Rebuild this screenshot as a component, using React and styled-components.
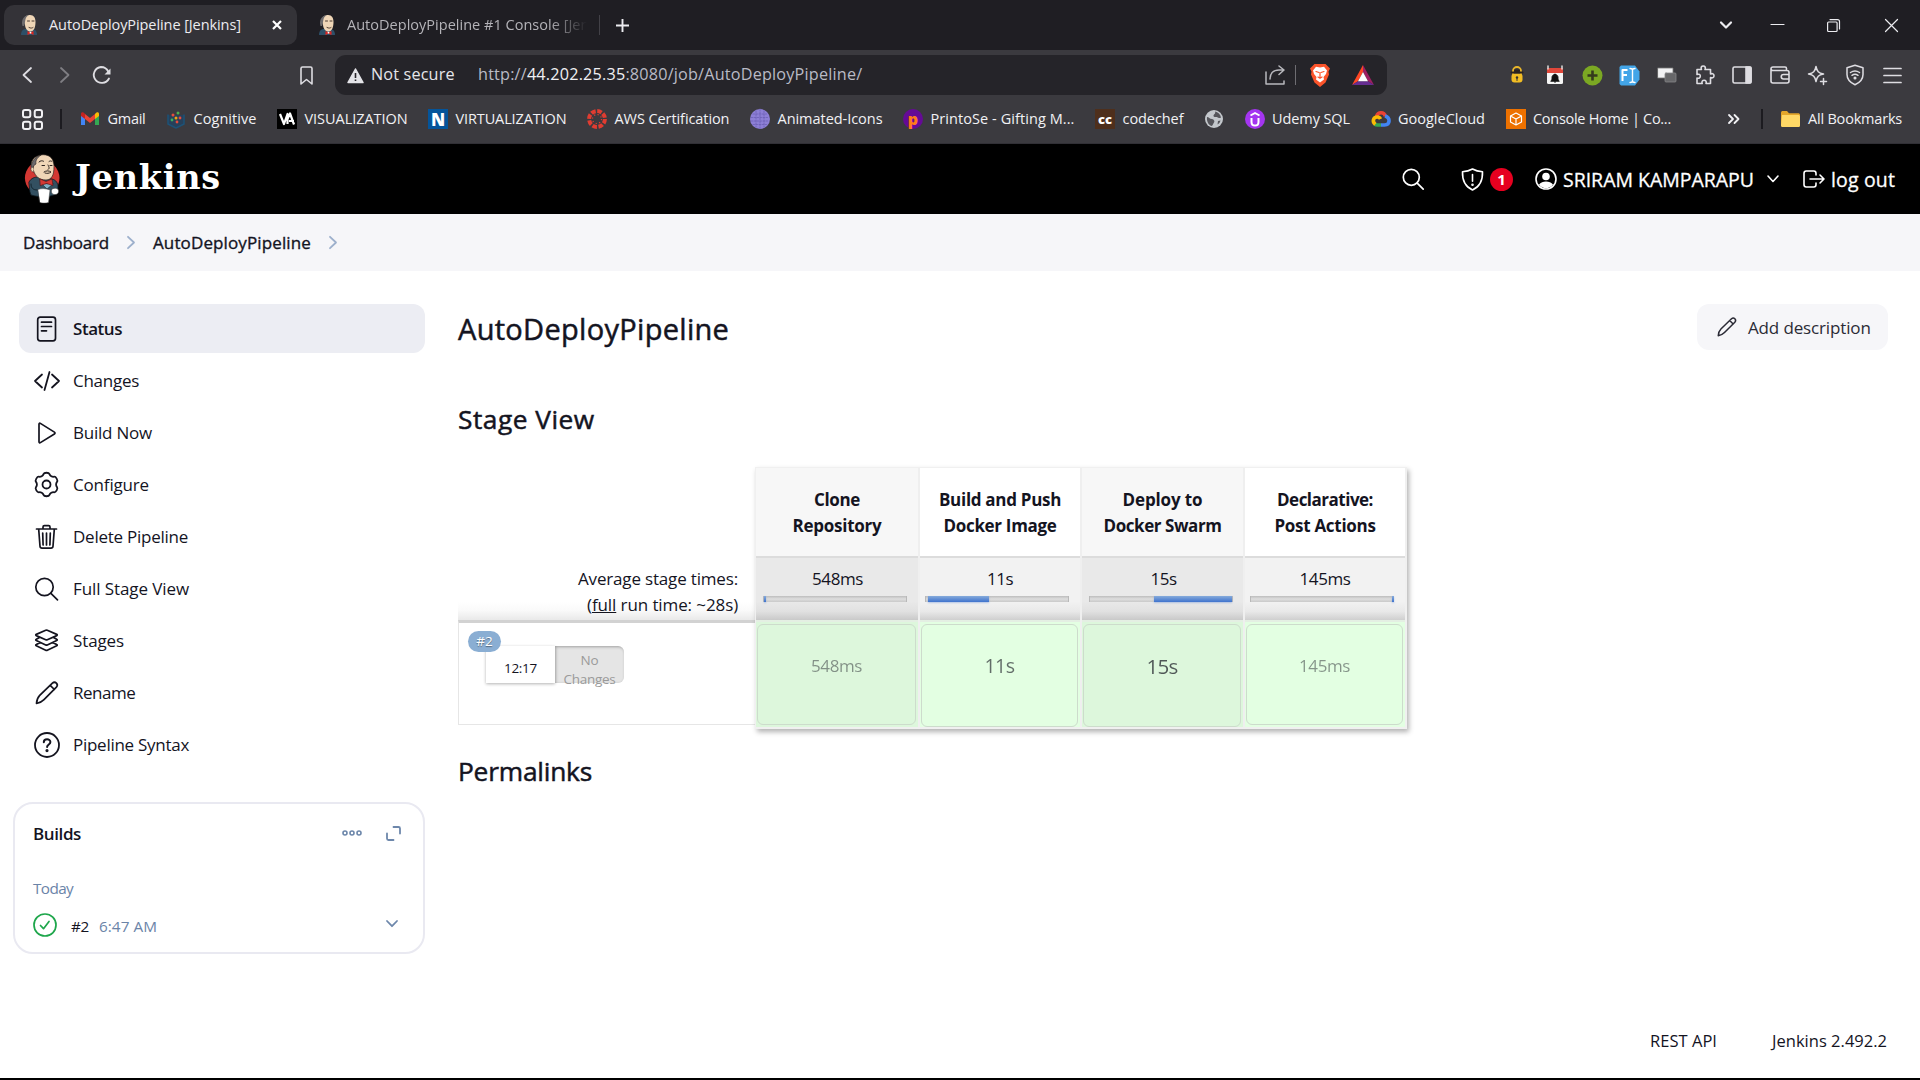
import React from "react";
import styled, { createGlobalStyle } from "styled-components";

const Global = createGlobalStyle`
  * { box-sizing: border-box; }
  html, body { margin: 0; padding: 0; background: #fff; overflow: hidden; }
  body { font-family: "Open Sans", "Noto Sans", sans-serif; color: #14141f; }
`;

const Screen = styled.div`
  width: 1920px;
  height: 1080px;
  display: flex;
  flex-direction: column;
  overflow: hidden;
  background: #fff;
  border-bottom: 2px solid #000;
`;

const Label = styled.span`
  display: block;
  flex: none;
  box-sizing: content-box;
  width: ${(p) => (p.$w ? `${p.$w}px` : "auto")};
  padding-top: ${(p) => p.$pad || 0}px;
  margin-left: ${(p) => p.$ml || 0}px;
  font-size: ${(p) => p.$s || 17}px;
  font-weight: ${(p) => p.$b || 400};
  letter-spacing: ${(p) => p.$ls || 0}px;
  color: ${(p) => p.$c || "inherit"};
  -webkit-text-stroke: ${(p) => p.$stroke || 0}px currentColor;
  white-space: nowrap;
  line-height: 1.3;
`;

/* ---------- shared drawing helpers ---------- */
const Glyph = styled.svg`
  display: block;
  flex: none;
  overflow: visible;
  margin-left: ${(p) => p.$ml || 0}px;
`;
const Icon = ({ w, h, box, sw = 1.5, ml, children, ...rest }) => (
  <Glyph
    width={w}
    height={h}
    viewBox={box || `0 0 ${w} ${h}`}
    fill="none"
    stroke="currentColor"
    strokeWidth={sw}
    strokeLinecap="round"
    strokeLinejoin="round"
    $ml={ml}
    {...rest}
  >
    {children}
  </Glyph>
);

const Favicon = () => (
  <Icon w={18} h={20} stroke="none">
    <path d="M1 20c0-4 2-6 5-6h6c3 0 5 2 5 6z" fill="#2d5068" />
    <path d="M4 6c0-4 2.500-6 6-6 4 0 5.500 3 5.500 7 0 5-1.500 9.500-5 9.500-3 0-5-2.500-5.500-6.500z" fill="#efd6b7" />
    <path d="M2.500 11C1 6 3 .5 9 0 5.500 2 5.500 4 5 7l-1 4z" fill="#6d6b6d" />
    <path d="M7.500 6h2M12 6h2M9 12.500c2 1 3 .6 4 0" stroke="#4b3a30" strokeWidth="1" />
    <path d="M7.500 16l3 1.500 3-1.500v4l-3-1.500-3 1.500z" fill="#e0241f" />
    <circle cx="10.500" cy="17.700" r=".9" fill="#fff" />
  </Icon>
);

/* ---------- browser: tab strip ---------- */
const TabStrip = styled.div`
  height: 50px;
  flex: none;
  display: flex;
  align-items: center;
  background: #1f1e23;
  color: #ececf0;
  padding-left: 4px;
`;
const Tab = styled.div`
  width: ${(p) => (p.$active ? 293 : 302)}px;
  height: 40px;
  border-radius: 10px;
  display: flex;
  align-items: center;
  gap: 11px;
  padding-left: ${(p) => (p.$active ? 16 : 21)}px;
  background: ${(p) => (p.$active ? "#343338" : "transparent")};
`;
const TabClose = styled.div`
  margin-left: 19px;
`;
const FadedTitle = styled.div`
  width: 240px;
  overflow: hidden;
  color: #b4b3b8;
  mask-image: linear-gradient(to right, #000 84%, transparent 100%);
`;
const TabDivider = styled.div`
  width: 1px;
  height: 20px;
  background: #424147;
  margin-right: 16px;
`;
const WindowControls = styled.div`
  margin-left: auto;
  display: flex;
  align-items: center;
  padding-right: 22px;
`;
const WinBtn = styled.div`
  margin-left: ${(p) => p.$ml}px;
`;

/* ---------- browser: toolbar ---------- */
const Toolbar = styled.div`
  height: 94px;
  flex: none;
  background: #3b3a3f;
  color: #dedde2;
  border-bottom: 1px solid #313036;
`;
const NavRow = styled.div`
  height: 50px;
  display: flex;
  align-items: center;
  padding-left: 22px;
`;
const NavButtons = styled.div`
  display: flex;
  align-items: center;
  width: 278px;
`;
const AddressBar = styled.div`
  margin-left: 22px;
  width: 1052px;
  height: 40px;
  border-radius: 11px;
  background: #252429;
  display: flex;
  align-items: center;
  padding: 0 13px 0 12px;
`;
const Url = styled(Label)`
  b { font-weight: 400; color: #f0f0f4; }
`;
const BarDivider = styled.div`
  width: 1px;
  height: 20px;
  background: #6e6d72;
  margin: 0 14px 0 10px;
`;
const AddressActions = styled.div`
  margin-left: auto;
  display: flex;
  align-items: center;
`;
const Extensions = styled.div`
  margin-left: auto;
  display: flex;
  align-items: center;
  padding-right: 9px;
`;
const Slot = styled.div`
  width: 37.5px;
  display: flex;
  justify-content: center;
`;
const BookmarkRow = styled.div`
  height: 38px;
  display: flex;
  align-items: center;
  padding: 0 18px 0 22px;
  color: #f1f1f4;
`;
const DarkDivider = styled.div`
  flex: none;
  width: 2px;
  height: 20px;
  background: #1c1b20;
  margin: ${(p) => (p.$end ? "0 9px 0 13px" : "0 18px 0 17px")};
`;
const Bookmark = styled.div`
  flex: none;
  display: flex;
  align-items: center;
  gap: 7.5px;
  margin-right: 20.5px;
`;
const Square = styled.div`
  width: 20px;
  height: 20px;
  display: flex;
  align-items: center;
  justify-content: center;
  background: ${(p) => p.$bg};
  color: ${(p) => p.$c || "#fff"};
  border-radius: ${(p) => (p.$round ? "50%" : 0)};
  font-size: ${(p) => p.$fs || 14}px;
  font-weight: 800;
  line-height: 1;
`;
const BookmarksEnd = styled.div`
  margin-left: auto;
  display: flex;
  align-items: center;
  gap: 8px;
`;

/* ---------- Jenkins header ---------- */
const Header = styled.header`
  height: 70px;
  flex: none;
  background: #000;
  color: #fff;
  display: flex;
  align-items: center;
  padding: 0 24px;
`;
const Brand = styled(Label)`
  font-family: "DejaVu Serif", serif;
  padding-bottom: 2px;
`;
const HeaderTools = styled.div`
  margin-left: auto;
  display: flex;
  align-items: center;
`;
const Badge = styled.div`
  width: 23px;
  height: 23px;
  margin: 0 22px 0 6px;
  border-radius: 50%;
  background: #e6001f;
  font-size: 15px;
  font-weight: 700;
  line-height: 23px;
  text-align: center;
`;
const Crumbs = styled.nav`
  height: 57px;
  flex: none;
  background: #f6f6f9;
  display: flex;
  align-items: center;
  padding-left: 23px;
  gap: 18px;
`;

/* ---------- page ---------- */
const Page = styled.div`
  flex: 1;
  display: flex;
`;
const Side = styled.aside`
  width: 425px;
  padding-top: 33px;
`;
const Tasks = styled.div`
  display: flex;
  flex-direction: column;
  gap: 3px;
  padding-left: 19px;
`;
const Task = styled.div`
  height: 49px;
  border-radius: 12px;
  display: flex;
  align-items: center;
  padding-left: 15px;
  background: ${(p) => (p.$on ? "#ecedf3" : "transparent")};
`;
const TaskIcon = styled.div`
  width: 25px;
  margin-right: 14px;
  display: flex;
  justify-content: center;
`;
const Card = styled.section`
  margin: 33px 0 0 13px;
  height: 152px;
  border: 2px solid #e9e9f1;
  border-radius: 20px;
  padding: 0 22px 0 18px;
`;
const CardHead = styled.div`
  height: 58px;
  display: flex;
  align-items: center;
  justify-content: space-between;
`;
const CardTools = styled.div`
  display: flex;
  align-items: center;
  gap: 24px;
  color: #6d87ab;
`;
const Today = styled.div`
  height: 51px;
  padding-top: 3px;
  display: flex;
  align-items: center;
  color: #6b84a8;
`;
const BuildLine = styled.div`
  display: flex;
  align-items: center;
  margin-top: -3px;
  height: 29px;
`;
const ChevronEnd = styled.div`
  margin: 0 3px 1px auto;
  color: #6d87ab;
`;

const Main = styled.main`
  flex: 1;
  padding: 33px 32px 0 33px;
  display: flex;
  flex-direction: column;
`;
const TitleRow = styled.div`
  display: flex;
  justify-content: space-between;
  height: 46px;
  align-items: center;
`;
const AddButton = styled.div`
  width: 191px;
  height: 46px;
  border-radius: 12px;
  background: #f6f6f9;
  display: flex;
  align-items: center;
  padding-left: 20px;
  gap: 11px;
  color: #2b2b36;
`;
const SectionTitle = styled(Label)`
  height: 34px;
  line-height: 34px;
  margin-top: ${(p) => p.$mt}px;
`;
const Stage = styled.div`
  display: flex;
  align-items: flex-start;
  height: 262px;
  margin-top: 31px;
`;
const RunColumn = styled.div`
  width: 297px;
  padding-top: 91px;
`;
const Average = styled.div`
  height: 62px;
  padding: 8px 17px 0 0;
  display: flex;
  flex-direction: column;
  align-items: flex-end;
  background: linear-gradient(to bottom, #fff 70%, #fafafa 84%, #e9e9e9 100%);
  span { line-height: 26px; }
`;
const RunBox = styled.div`
  height: 105px;
  border: 1px solid #e6e6e6;
  border-top: 3px solid #d2d2d2;
  border-right: 0;
  padding: 8px 0 0 9px;
`;
const RunBadge = styled.div`
  position: relative;
  z-index: 1;
  width: 33px;
  height: 21px;
  border-radius: 11px;
  background: #8aaed3;
  color: #fff;
  font-size: 13.5px;
  line-height: 20px;
  text-align: center;
  text-shadow: 0 1px 1px rgba(0, 0, 0, 0.4);
`;
const RunMeta = styled.div`
  display: flex;
  margin: -6px 0 0 18px;
`;
const RunTime = styled.div`
  width: 69px;
  height: 37px;
  background: #fff;
  box-shadow: 0 1px 3px rgba(0, 0, 0, 0.3);
  padding: 14px 0 0 18px;
`;
const NoChanges = styled.div`
  width: 69px;
  height: 37px;
  border-radius: 0 6px 6px 0;
  background: #e5e5e5;
  box-shadow: inset 1px 1px 3px rgba(0, 0, 0, 0.3);
  color: #9a9a9a;
  padding-top: 5px;
  display: flex;
  flex-direction: column;
  align-items: center;
  span { line-height: 19px; }
`;
const StageTable = styled.div`
  display: grid;
  grid-template-columns: 164px 162px 163px 160px;
  width: 652px;
  height: 262px;
  border: 1px solid #f0f0f0;
  border-right-width: 2px;
  border-bottom: 2px solid #f0f0f0;
  box-shadow: 2px 3px 5px rgba(0, 0, 0, 0.3);
`;
const StageCol = styled.div`
  border-right: 2px solid #efefef;
  background: ${(p) => (p.$odd ? "#f7f7f7" : "#fff")};
  &:last-child { border-right: 0; }
`;
const StageHead = styled.div`
  height: 88px;
  padding-top: 19px;
  display: flex;
  flex-direction: column;
  align-items: center;
  span { line-height: 26px; }
`;
const StageAvg = styled.div`
  height: 64px;
  border-top: 2px solid #dcdcdc;
  padding: 8px 0 0 ${(p) => (p.$odd ? 6.500 : 5)}px;
  background: linear-gradient(
    to bottom,
    ${(p) => (p.$odd ? "#e9e9e9 70%, #e1e1e1 86%, #c9c9c9 100%" : "#f2f2f2 70%, #e9e9e9 86%, #cfcfcf 100%")}
  );
  display: grid;
  grid-template-columns: 144px;
  justify-items: center;
  align-content: start;
  span { line-height: 26px; }
`;
const Meter = styled.div`
  width: 144px;
  height: 6px;
  margin-top: 4px;
  background: linear-gradient(to bottom, #bdbdbd, #dedede 50%, #c9c9c9);
  border: solid #b9b9b9;
  border-width: 0 1px;
  display: flex;
`;
const MeterFill = styled.div`
  flex: none;
  margin-left: ${(p) => p.$from}px;
  width: ${(p) => p.$len}px;
  background: linear-gradient(to bottom, #86abdb, #3f73cd);
  box-shadow: 0 1px 2px rgba(63, 115, 205, 0.35);
`;
const Cell = styled.div`
  height: 107px;
  border-top: 2px solid #e4efe3;
  padding: 2px 2px 2px 1px;
  background: ${(p) => (p.$odd ? "#ddf7dc" : "#e3ffe2")};
`;
const CellCard = styled.div`
  height: ${(p) => (p.$tall ? 103 : 101)}px;
  border: 1px solid #cddccc;
  border-radius: 6px;
  display: flex;
  justify-content: center;
  padding-top: ${(p) => (p.$tall ? 28 : 30)}px;
`;
const CellTime = styled(Label)`
  opacity: ${(p) => p.$o};
`;
const Footer = styled.footer`
  margin-top: auto;
  display: flex;
  justify-content: flex-end;
  gap: 54px;
  padding-bottom: 27px;
`;

/* ---------- data ---------- */
const gearPath = (() => {
  const pts = [];
  for (let k = 0; k < 6; k++) {
    const a = k * 60 - 90;
    [[12, -12], [12, 12], [9.7, 21], [9.7, 39]].forEach(([r, d]) => {
      const t = ((a + d) * Math.PI) / 180;
      pts.push([12.5 + r * Math.cos(t), 12.5 + r * Math.sin(t)]);
    });
  }
  const mid = (p, q) => [(p[0] + q[0]) / 2, (p[1] + q[1]) / 2];
  let d = "";
  pts.forEach((p, i) => {
    const n = pts[(i + 1) % pts.length];
    const prev = pts[(i - 1 + pts.length) % pts.length];
    if (i === 0) d += `M${mid(prev, p)}`;
    d += `Q${p} ${mid(p, n)}`;
  });
  return d + "Z";
})();

const Pencil = ({ s = 24 }) => (
  <Icon w={s} h={s} box="0 0 24 24" sw={s < 22 ? 1.8 : 1.7}>
    <path d="M1.500 22.500c.3-4 1.300-6.200 3.200-8.100L17.400 2.200c1.300-1.200 2.900-1.100 4 0s1.200 2.700 0 4L9 18.700c-1.900 1.900-3.500 3.300-7.500 3.800zM15.200 4.300l4.200 4.200" />
  </Icon>
);

const tasks = [
  ["Status", 49, -0.46, <Icon w={25} h={26} sw={1.7}><rect x="3.700" y="1.200" width="17.800" height="23.600" rx="2.500" /><path d="M7.500 6.200h10M7.500 10.500h10M7.500 14.800h5" /></Icon>],
  ["Changes", 66, -0.27, <Icon w={26} h={20} sw={1.8}><path d="M8 3.500L1 10l7 6.500M18 3.500L25 10l-7 6.500M15.500 1l-5 18" /></Icon>],
  ["Build Now", 79, -0.22, <Icon w={25} h={22} sw={1.7}><path d="M5 2.200v17.600c0 .9.7 1.200 1.400.8l14-8.600c.8-.5.8-1.400 0-1.900l-14-8.700c-.7-.4-1.400-.1-1.400.8z" /></Icon>],
  ["Configure", 76, -0.17, <Icon w={25} h={25} sw={1.8}><path d={gearPath} /><circle cx="12.500" cy="12.500" r="4" /></Icon>],
  ["Delete Pipeline", 115, -0.25, <Icon w={25} h={26} sw={1.7}><path d="M2.500 5h20M4.700 5.300l1.300 17c.1 1.200.8 1.900 2 1.900h9c1.200 0 1.900-.7 2-1.900l1.300-17M9 4.800V3c0-.9.500-1.400 1.400-1.400h4.200c.9 0 1.400.5 1.400 1.400v1.800M12.500 9v12M8.700 9l.4 12M16.300 9l-.4 12" /></Icon>],
  ["Full Stage View", 116, -0.09, <Icon w={25} h={24} sw={1.7}><circle cx="10.500" cy="10" r="8.700" /><path d="M16.900 16.300l6.600 6.500" /></Icon>],
  ["Stages", 51, -0.12, <Icon w={25} h={24} sw={1.7}><path d="M11.700 1.300L2.300 5.400c-.7.300-.7.900 0 1.200l9.400 4.100c.6.200 1.100.2 1.600 0l9.400-4.100c.7-.3.700-.9 0-1.200l-9.400-4.100c-.5-.2-1-.2-1.600 0zM5.500 8.600l-3.200 1.700c-.7.300-.7.900 0 1.200l9.400 4.400c.6.200 1.100.2 1.600 0l9.400-4.400c.7-.3.700-.9 0-1.200l-3.200-1.700M5.500 13.900l-3.200 1.700c-.7.300-.7.900 0 1.200l9.400 4.400c.6.300 1.100.3 1.600 0l9.400-4.400c.7-.3.700-.9 0-1.200l-3.200-1.700" /></Icon>],
  ["Rename", 62, -0.5, <Pencil />],
  ["Pipeline Syntax", 116, -0.27, <Icon w={26} h={26} sw={1.8}><circle cx="13" cy="13" r="12" /><path d="M9.800 10.300c0-3.900 6.600-3.900 6.600-.2 0 2.500-3.300 2.300-3.300 5" strokeWidth="2" /><circle cx="13" cy="18.600" r=".7" fill="currentColor" /></Icon>],
];

const stages = [
  { head: [["Clone", 46, -0.35], ["Repository", 89, -0.25]], avg: ["548ms", 51, -0.4], from: 0, len: 2, cell: [17, 51, -0.4, 0.45], odd: true },
  { head: [["Build and Push", 122, -0.3], ["Docker Image", 113, -0.32]], avg: ["11s", 26, -0.52], from: 2, len: 61, cell: [19.5, 30, -0.53, 0.62], tall: true },
  { head: [["Deploy to", 80, -0.12], ["Docker Swarm", 118, -0.43]], avg: ["15s", 26, -0.52], from: 64, len: 78, cell: [20.5, 31, -0.74, 0.7], odd: true, tall: true },
  { head: [["Declarative:", 96, -0.5], ["Post Actions", 101, -0.3]], avg: ["145ms", 51, -0.4], from: 141, len: 2, cell: [17, 51, -0.4, 0.45] },
];

const bookmarks = [
  ["Gmail", 38, -0.27, <Icon w={20} h={20} stroke="none"><path d="M1 4.500V16h4V9z" fill="#4285f4" /><path d="M19 4.500V16h-4V9z" fill="#34a853" /><path d="M15 5v5l4-3V5c0-2-2.300-2.600-4 0z" fill="#fbbc04" /><path d="M5 5v5L1 7V5c0-2 2.300-2.600 4 0z" fill="#c5221f" /><path d="M5 5l5 4 5-4v5l-5 4-5-4z" fill="#ea4335" /></Icon>],
  ["Cognitive", 63, 0.06, <Icon w={20} h={20} stroke="none"><path d="M2 6v9l8 4 8-4V6" stroke="#1d5277" strokeWidth="1.500" fill="#27405a" /><circle cx="7" cy="6" r="1.500" fill="#e74c3c" /><circle cx="12" cy="4" r="1.500" fill="#4caf50" /><circle cx="10" cy="9" r="1.500" fill="#f1a40f" /><circle cx="14" cy="9" r="1.400" fill="#e74c3c" /><circle cx="6" cy="11" r="1.400" fill="#3fae5b" /><circle cx="11" cy="13" r="1.400" fill="#e74c3c" /></Icon>],
  ["VISUALIZATION", 103, -0.05, <Square $bg="#000"><Icon w={16} h={14} sw={2.2} strokeLinecap="butt"><path d="M1 2l4 10L8.500 2v10M8.500 7L11 1.500 15 12.500M10 9h5" /></Icon></Square>],
  ["VIRTUALIZATION", 111, -0.12, <Square $bg="#04549a" $fs={17}>N</Square>],
  ["AWS Certification", 115, -0.08, <Icon w={20} h={20} stroke="#e03c31" strokeLinecap="butt"><circle cx="10" cy="10" r="7.900" strokeWidth="4" strokeDasharray="4.600 1.605" /><circle cx="10" cy="10" r="4.500" strokeWidth="1.200" strokeDasharray="1.200 2.334" /></Icon>],
  ["Animated-Icons", 105, -0.04, <Icon w={20} h={20} stroke="none"><circle cx="10" cy="10" r="10" fill="#8d7fd6" /><path d="M3 5h14M1 8.500h18M1 12h18M3 15.500h14M6 2v16M10 0v20M14 2v16" stroke="#6c5fb5" strokeWidth=".8" strokeDasharray="1.500 1.500" /></Icon>],
  ["PrintoSe - Gifting M...", 144, 0.07, <Square $bg="#650a96" $c="#ff7a1a" $round $fs={16}>p</Square>],
  ["codechef", 61, -0.07, <Square $bg="#4e2f1c" $fs={13}>cc</Square>],
  ["", 0, 0, <Icon w={20} h={20} stroke="none"><circle cx="10" cy="10" r="9" fill="#c3c7cc" /><path d="M11 2.500c3 .6 5.500 2.700 6 6-1.500 1-3 .5-4-.5-1.500-.3-3 .5-3.500-1 0-2 2.500-2 1.500-4.500zM3 8c2 0 2.500 2 5 2 2 .5 3 2 2 3.500-1 1-1 3-2.500 3.500C4.500 16 2.500 12.500 3 8zM14 12l2.500-.5c-.5 2-1.500 3.300-3 4z" fill="#55555b" /></Icon>],
  ["Udemy SQL", 78, -0.09, <Square $bg="#a435f0" $round><Icon w={12} h={16} sw={2} strokeLinecap="butt"><path d="M1.500 4.500L6 2l4.500 2.500M2.500 7v4c0 2.500 1.500 3.600 3.500 3.600s3.500-1.100 3.500-3.600V7" /></Icon></Square>],
  ["GoogleCloud", 87, 0, <Icon w={20} h={20} sw={3.6} strokeLinecap="butt"><path d="M5.500 7.500C7 2.600 13 2.600 14.500 7.300" stroke="#ea4335" /><path d="M14 7c5.500 1.500 5.500 9-.5 9H10" stroke="#4285f4" /><path d="M10 16H6.500c-1 0-2-.3-2.700-.9" stroke="#34a853" /><path d="M4.300 15.300C1 12.500 2 8 6.500 8c1.500 0 2.500 1 3 2" stroke="#fbbc05" /></Icon>],
  ["Console Home | Co...", 138, -0.29, <Square $bg="#ed7100"><Icon w={14} h={14} sw={1.2}><path d="M7 1l5.500 3v6L7 13l-5.500-3V4zM1.500 4L7 7l5.500-3M7 7v6" /></Icon></Square>],
];

const extensions = [
  <Icon w={14} h={18} stroke="none"><path d="M3 8V5a4 4 0 018 0v3" stroke="#e9b62b" strokeWidth="1.800" /><rect x="1.500" y="7.500" width="11" height="9" rx="3" fill="#f2bd24" /><path d="M1.500 6.500h11M5 4.500h4" stroke="#2a2320" strokeWidth="2" /><circle cx="7" cy="11.500" r="1.200" fill="#333" /><path d="M7 12v2.500" stroke="#333" strokeWidth="1" /></Icon>,
  <Icon w={18} h={20} stroke="none"><rect x="1" y="3" width="16" height="16" rx="1.500" fill="#f5f5f5" /><path d="M1 3h16v5H1z" fill="#e0473a" /><path d="M2 1v3M16 1v3" stroke="#ddd" strokeWidth="1.500" /><path d="M5 16c1-1 1-2 1-3.500 0-4 6-4 6 0 0 1.500 0 2.500 1 3.500zM9 9v8.500" fill="#111" stroke="#111" strokeWidth="1" /></Icon>,
  <Icon w={21} h={21} stroke="none"><circle cx="10.500" cy="10.500" r="10" fill="#7ba823" /><path d="M10.500 5.500v10M5.500 10.500h10" stroke="#343a1d" strokeWidth="2.600" strokeLinecap="butt" /></Icon>,
  <Icon w={21} h={21} stroke="none"><path d="M2 .5h14l4.500 6v8l-4.500 6H2L.5 19V2z" fill="#43a5e8" /><path d="M3.500 16V5h5M3.500 10h4.500" stroke="#fff" strokeWidth="2" strokeLinecap="butt" /><path d="M11 3.500c2 0 2.500.5 2.500 1.500 0-1 .5-1.500 2.500-1.500M13.500 5v11M11 17.500c2 0 2.500-.5 2.500-1.500 0 1 .5 1.500 2.500 1.500" stroke="#fff" strokeWidth="1.400" /></Icon>,
  <Icon w={18} h={16} stroke="none"><rect x="0" y="1" width="15" height="10" fill="#f2f2f4" stroke="#777" strokeWidth=".8" /><rect x="7" y="6" width="11" height="9" rx="1" fill="#67676a" stroke="#858588" strokeWidth=".8" /></Icon>,
  <Icon w={20} h={20} sw={1.6}><path d="M2 4.500h4.500C5.500 2.500 6.500 1 8.200 1s2.800 1.500 1.800 3.500h5.500V9c2-1 3.500 0 3.500 1.700s-1.500 2.800-3.500 1.800v6H11c.8-2-.3-3.300-1.900-3.300S6.400 16.500 7.200 18.500H2V13c2.300.7 3.300-.5 3.300-2S4.300 8.700 2 9.500z" /></Icon>,
  <Icon w={20} h={18} sw={1.6}><rect x="1" y="1" width="18" height="16" rx="1.500" /><path d="M14 1h4c.6 0 1 .4 1 1v14c0 .6-.4 1-1 1h-4z" fill="currentColor" /></Icon>,
  <Icon w={20} h={18} sw={1.6}><path d="M16.500 4.500V2.500c0-.9-.6-1.500-1.500-1.500H3C1.800 1 1 1.800 1 2.800S1.800 4.500 3 4.500h14c1.200 0 2 .8 2 2V15c0 1.200-.8 2-2 2H3c-1.200 0-2-.8-2-2V3M19 8.500h-5.500c-3 0-3 4.500 0 4.500H19" /></Icon>,
  <Icon w={21} h={21} sw={1.5}><path d="M9 1.500c1 5 2.500 6.500 7.500 7.500-5 1-6.500 2.500-7.500 7.500-1-5-2.500-6.500-7.500-7.500C6.500 8 8 6.500 9 1.500zM16.500 13.500v6M13.500 16.500h6" /></Icon>,
  <Icon w={20} h={22} sw={1.5}><path d="M10 1.200l8 2.600v6.700c0 5-3 8-8 10.300-5-2.300-8-5.300-8-10.300V3.800z" /><path d="M5.500 8.500c3-2 6-2 9 0M7 11.300c2-1.300 4-1.300 6 0" /><circle cx="10" cy="14" r=".8" fill="currentColor" /></Icon>,
  <Icon w={19} h={17} sw={1.7}><path d="M1 1.500h17M1 8.500h17M1 15.500h17" /></Icon>,
];

const Crumb = () => <Icon w={8} h={13} sw={1.8} color="#9db0cc"><path d="M1 .8l6 5.700-6 5.700" /></Icon>;

const Mascot = () => (
  <Icon w={36} h={50} stroke="none">
    <circle cx="18.200" cy="24" r="17.300" fill="#d33833" />
    <path d="M5 28c2-4 6-5 9-5l14 2c4 1 6 4 6 8l-1 6c-4 4-16 5-26 2L6 38z" fill="#335061" stroke="#0c1a22" strokeWidth=".8" />
    <path d="M8 15C5 8 10 1 19 .7c8 0 11 5 11 12 0 8-2 13-8 13.300-7 0-11-4-12.500-9.500z" fill="#f0d6b7" stroke="#2b2320" strokeWidth=".7" />
    <path d="M8.500 17C5 15 7.500 3.500 17 1c-4 3-5.500 5-5 9l-2 1.500z" fill="#6d6b6d" stroke="#2b2320" strokeWidth=".6" />
    <path d="M9 13c-3 0-3 5 .5 5" fill="#f0d6b7" stroke="#2b2320" strokeWidth=".6" />
    <path d="M15 8c1.500-1.500 3-1.500 4.500-.8M25 7.500c1-.8 2-.8 3 0M18 11.500h2.500M26 11.500h2M24 11c1 2 2 3.500 0 4.500M20 18c2-1.500 5-1.500 7 0-2 1.500-4 1.700-6 1" stroke="#2b2320" strokeWidth="1" />
    <path d="M18 30l5 5 6-5z" fill="#81b0c4" stroke="#0c1a22" strokeWidth=".5" />
    <path d="M16 25l6 2.500 6-2.500 1 6.500-6.500-2-6 2z" fill="#d33833" stroke="#5b1010" strokeWidth=".6" />
    <path d="M14 35.500c4-1.500 8-1 12 .5l-1.500 12.500c-3 .8-6 .8-8.500 0z" fill="#fff" stroke="#444" strokeWidth=".5" />
    <path d="M28 35c3-1.500 6-1 6.500 1.500s-1.500 4.500-4.500 4-3-4-2-5.500z" fill="#fff" stroke="#444" strokeWidth=".6" />
    <path d="M7 30c0 4 2 6 6 6" stroke="#0c1a22" strokeWidth=".8" />
  </Icon>
);

export default function App() {
  return (
    <Screen>
      <Global />
      <TabStrip>
        <Tab $active>
          <Favicon />
          <Label $w={193} $s={14.5} $ls={-0.08}>AutoDeployPipeline [Jenkins]</Label>
          <TabClose><Icon w={10} h={10} sw={2.2} color="#fff" strokeLinecap="butt"><path d="M1 1l8 8M9 1l-8 8" /></Icon></TabClose>
        </Tab>
        <Tab>
          <Favicon />
          <FadedTitle><Label $s={14.5} $ls={0.02}>AutoDeployPipeline #1 Console [Jenk</Label></FadedTitle>
        </Tab>
        <TabDivider />
        <Icon w={13} h={13} sw={1.9} strokeLinecap="butt"><path d="M6.500 0v13M0 6.500h13" /></Icon>
        <WindowControls>
          <WinBtn><Icon w={12} h={8} sw={2.2}><path d="M1 1.500l5 5 5-5" /></Icon></WinBtn>
          <WinBtn $ml={39}><Icon w={13} h={13} sw={1.2}><path d="M0 5.500h13" /></Icon></WinBtn>
          <WinBtn $ml={43}><Icon w={13} h={13} sw={1.2}><rect x=".6" y="3" width="9.500" height="9.500" rx="1" /><path d="M3 .6h7.500c1.200 0 2 .8 2 2V10" /></Icon></WinBtn>
          <WinBtn $ml={45}><Icon w={13} h={13} sw={1.2}><path d="M.5.5l12 12M12.500.5l-12 12" /></Icon></WinBtn>
        </WindowControls>
      </TabStrip>

      <Toolbar>
        <NavRow>
          <NavButtons>
            <Icon w={10} h={16} sw={1.8}><path d="M9 1L1.500 8 9 15" /></Icon>
            <Icon w={10} h={16} sw={1.8} ml={28} color="#7f7e83"><path d="M1 1l7.500 7L1 15" /></Icon>
            <Icon w={19} h={18} sw={1.8} ml={22}><path d="M17 12.500A8 8 0 119 1c3.500 0 6 1.800 7.500 5" /><path d="M18.500 2.500v6h-6z" fill="currentColor" stroke="none" /></Icon>
          </NavButtons>
          <Icon w={13} h={19} sw={1.6}><path d="M1 18V2.500C1 1.500 1.700 1 2.500 1h8c.9 0 1.500.6 1.500 1.500V18l-5.500-4.500z" /></Icon>
          <AddressBar>
            <Icon w={17} h={15} stroke="none"><path d="M8.500 1L16 14.500H1z" fill="#e4e4e8" stroke="#e4e4e8" /><path d="M8.500 5v5M8.500 11.500v1.600" stroke="#252429" strokeWidth="1.600" strokeLinecap="butt" /></Icon>
            <Label $w={84} $s={16.2} $ls={0.16} $c="#e6e6ea" $ml={7}>Not secure</Label>
            <Url $w={386} $s={16.2} $ls={0.2} $c="#b9bbc6" $ml={23}>http://<b>44.202.25.35</b>:8080/job/AutoDeployPipeline/</Url>
            <AddressActions>
              <Icon w={20} h={20} sw={1.5} color="#b8b8bd"><path d="M1 7v12h18v-3M5 14c0-5 3-9 9-9h4M14 1l5 4-5 4.500" /></Icon>
              <BarDivider />
              <Icon w={20} h={23} stroke="none"><path d="M4.500 0h11L20 4.500l-1.500 3 .5 3-3.500 8L10 23l-5.500-4.500-3.500-8 .5-3L0 4.500z" fill="#fb542b" /><path d="M10 3.500l4-.7 3 3.700-1 3.500-2.500 3 .5 2.500-4 3-4-3 .5-2.500L4 10 3 6.500l3-3.700z" fill="#fff" /><path d="M6 7.500l3 1M14 7.500l-3 1M8 13l2 1.200 2-1.200M10 9v4" stroke="#fb542b" strokeWidth="1.200" /></Icon>
              <Icon w={22} h={20} ml={22} stroke="none"><path d="M11 0L0 20l6-3.800L11 7z" fill="#ff4724" /><path d="M11 0l11 20-6-3.800L11 7z" fill="#9e1f63" /><path d="M0 20h22l-6-3.800H6z" fill="#662d91" /><path d="M11 7l5 9.200H6z" fill="#fff" /></Icon>
            </AddressActions>
          </AddressBar>
          <Extensions>{extensions.map((e, i) => <Slot key={i}>{e}</Slot>)}</Extensions>
        </NavRow>
        <BookmarkRow>
          <Icon w={21} h={21} sw={2}><rect x="1" y="1" width="7.300" height="7.300" rx="2" /><rect x="12.700" y="1" width="7.300" height="7.300" rx="2" /><rect x="1" y="12.700" width="7.300" height="7.300" rx="2" /><rect x="12.700" y="12.700" width="7.300" height="7.300" rx="2" /></Icon>
          <DarkDivider />
          {bookmarks.map(([t, w, ls, icon], i) => (
            <Bookmark key={i}>
              {icon}
              {t && <Label $w={w} $ls={ls} $s={14.5}>{t}</Label>}
            </Bookmark>
          ))}
          <BookmarksEnd>
            <Icon w={12} h={10} sw={1.8}><path d="M1 1l4 4-4 4M6.500 1l4 4-4 4" /></Icon>
            <DarkDivider $end />
            <Icon w={20} h={18} stroke="none"><path d="M1 3c0-1.500.6-2 2-2h4l2 2.300h9c1.300 0 2 .6 2 2V15c0 1.400-.7 2-2 2H3c-1.400 0-2-.6-2-2z" fill="#e3a62b" /><path d="M2 5h16c1.300 0 2 .6 2 2v8c0 1.400-.7 2-2 2H3c-1.400 0-2-.6-2-2z" fill="#ffd866" /></Icon>
            <Label $w={94} $s={14.5} $ls={-0.2}>All Bookmarks</Label>
          </BookmarksEnd>
        </BookmarkRow>
      </Toolbar>

      <Header>
        <Mascot />
        <Brand $w={147} $s={33.5} $b={700} $ls={0.75} $ml={15}>Jenkins</Brand>
        <HeaderTools>
          <Icon w={22} h={22} sw={1.7}><circle cx="9.300" cy="9.300" r="8" /><path d="M15.200 15.200l6 6" /></Icon>
          <Icon w={23} h={23} sw={1.6} ml={37}><path d="M11.500 1c3 1.700 6 2.500 10 2.700.3 8-2 14.500-10 18.300C3.500 18.200 1.200 11.700 1.500 3.700c4-.2 7-1 10-2.700zM11.500 6.500v6.800" /><circle cx="11.500" cy="16.800" r=".5" fill="currentColor" /></Icon>
          <Badge>1</Badge>
          <Icon w={22} h={22} sw={1.6}><circle cx="11" cy="11" r="10" /><circle cx="11" cy="8.500" r="3.800" fill="currentColor" stroke="none" /><path d="M4 16.500c3-4 11-4 14 0-3.500 5-10.500 5-14 0z" fill="currentColor" stroke="none" /></Icon>
          <Label $w={191} $s={19.5} $stroke={0.3} $pad={2} $ls={-0.02} $ml={6}>SRIRAM KAMPARAPU</Label>
          <Icon w={12} h={8} sw={1.6} ml={13}><path d="M1 1l5 5.500L11 1" /></Icon>
          <Icon w={22} h={18} sw={1.6} ml={24}><path d="M13 5V3.500C13 2 12.300 1 10.800 1H3.200C1.700 1 1 2 1 3.500v11C1 16 1.700 17 3.200 17h7.600c1.500 0 2.200-1 2.200-2.500V13M7 9h14M17 5l4 4-4 4" /></Icon>
          <Label $w={65} $s={19.5} $stroke={0.3} $pad={2} $ls={0.15} $ml={6}>log out</Label>
        </HeaderTools>
      </Header>

      <Crumbs>
        <Label $w={86} $s={17} $stroke={0.35} $pad={1} $ls={-0.19}>Dashboard</Label>
        <Crumb />
        <Label $w={158} $s={17} $stroke={0.35} $pad={1} $ls={0.12}>AutoDeployPipeline</Label>
        <Crumb />
      </Crumbs>

      <Page>
        <Side>
          <Tasks>
            {tasks.map(([t, w, ls, icon], i) => (
              <Task key={t} $on={i === 0}>
                <TaskIcon>{icon}</TaskIcon>
                <Label $w={w} $ls={ls} $pad={2} $b={i === 0 ? 600 : 400}>{t}</Label>
              </Task>
            ))}
          </Tasks>
          <Card>
            <CardHead>
              <Label $w={48} $b={600} $pad={2} $ls={-0.39}>Builds</Label>
              <CardTools>
                <Icon w={20} h={6} sw={1.6}><circle cx="3" cy="3" r="2" /><circle cx="10" cy="3" r="2" /><circle cx="17" cy="3" r="2" /></Icon>
                <Icon w={15} h={15} sw={1.8}><path d="M7.500 1h5c1 0 1.500.5 1.500 1.500v5M1 7.500v5c0 1 .5 1.500 1.500 1.500h5" /></Icon>
              </CardTools>
            </CardHead>
            <Today><Label $w={39} $s={15.3} $ls={-0.6}>Today</Label></Today>
            <BuildLine>
              <Icon w={24} h={24} sw={1.7} color="#1ea64b"><circle cx="12" cy="12" r="11" /><path d="M7.500 12.500l3 3.200 5.500-7.200" /></Icon>
              <Label $w={18} $s={15.3} $pad={4} $ls={-0.32} $ml={14}>#2</Label>
              <Label $w={58} $s={15.3} $pad={4} $ls={0.05} $c="#6b84a8" $ml={10}>6:47 AM</Label>
              <ChevronEnd><Icon w={12} h={8} sw={1.8}><path d="M1 1l5 5.200L11 1" /></Icon></ChevronEnd>
            </BuildLine>
          </Card>
        </Side>

        <Main>
          <TitleRow>
            <Label $w={271} $s={29} $stroke={0.5} $pad={3} $ls={0.3}>AutoDeployPipeline</Label>
            <AddButton>
              <Pencil s={20} />
              <Label $w={123} $pad={2} $ls={-0.14}>Add description</Label>
            </AddButton>
          </TitleRow>
          <SectionTitle $w={137} $s={26.3} $stroke={0.5} $ls={0.5} $mt={52}>Stage View</SectionTitle>
          <Stage>
            <RunColumn>
              <Average>
                <Label $w={160} $ls={-0.17}>Average stage times:</Label>
                <Label $w={151} $ls={-0.1}>(<u>full</u> run time: ~28s)</Label>
              </Average>
              <RunBox>
                <RunBadge>#2</RunBadge>
                <RunMeta>
                  <RunTime><Label $w={33} $s={13.5} $ls={-0.29}>12:17</Label></RunTime>
                  <NoChanges>
                    <Label $w={18} $s={13.5} $ls={-0.15}>No</Label>
                    <Label $w={52} $s={13.5} $ls={-0.27}>Changes</Label>
                  </NoChanges>
                </RunMeta>
              </RunBox>
            </RunColumn>
            <StageTable>
              {stages.map((s, i) => (
                <StageCol key={i} $odd={s.odd}>
                  <StageHead>
                    {s.head.map(([t, w, ls]) => <Label key={t} $w={w} $ls={ls} $b={700}>{t}</Label>)}
                  </StageHead>
                  <StageAvg $odd={s.odd}>
                    <Label $w={s.avg[1]} $ls={s.avg[2]} $ml={6}>{s.avg[0]}</Label>
                    <Meter><MeterFill $from={s.from} $len={s.len} /></Meter>
                  </StageAvg>
                  <Cell $odd={s.odd}>
                    <CellCard $tall={s.tall}>
                      <CellTime $w={s.cell[1]} $ls={s.cell[2]} $s={s.cell[0]} $o={s.cell[3]}>{s.avg[0]}</CellTime>
                    </CellCard>
                  </Cell>
                </StageCol>
              ))}
            </StageTable>
          </Stage>
          <SectionTitle $w={134} $s={26.3} $stroke={0.5} $ls={-0.2} $mt={25}>Permalinks</SectionTitle>
          <Footer>
            <Label $w={68} $s={16.5} $ls={0.03}>REST API</Label>
            <Label $w={116} $s={16.5} $ls={0.02}>Jenkins 2.492.2</Label>
          </Footer>
        </Main>
      </Page>
    </Screen>
  );
}
